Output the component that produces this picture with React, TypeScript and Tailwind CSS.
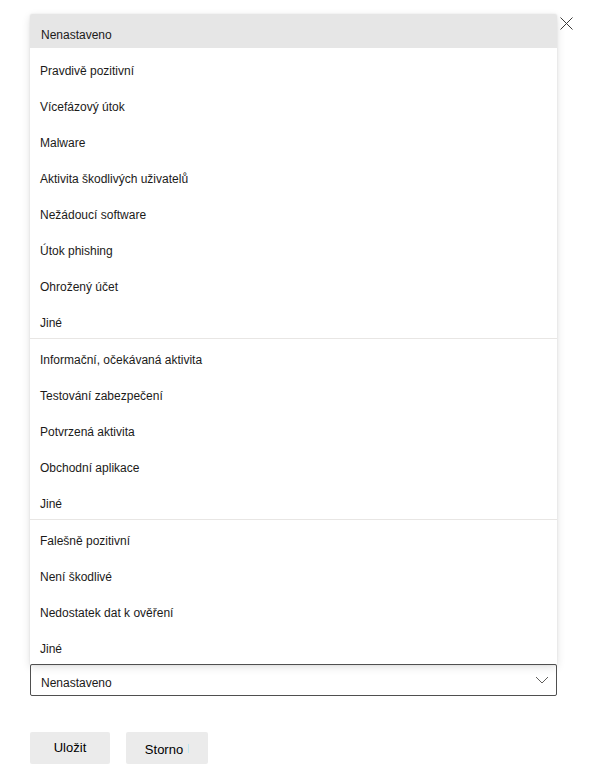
import React from "react";

const groups: string[][] = [
  [
    "Pravdivě pozitivní",
    "Vícefázový útok",
    "Malware",
    "Aktivita škodlivých uživatelů",
    "Nežádoucí software",
    "Útok phishing",
    "Ohrožený účet",
    "Jiné",
  ],
  [
    "Informační, očekávaná aktivita",
    "Testování zabezpečení",
    "Potvrzená aktivita",
    "Obchodní aplikace",
    "Jiné",
  ],
  ["Falešně pozitivní", "Není škodlivé", "Nedostatek dat k ověření", "Jiné"],
];

export default function App() {
  return (
    <div
      className="min-h-[779px] w-[589px] bg-white text-[12px] text-[#1b1a19]"
      style={{ fontFamily: '"Liberation Sans", Arial, sans-serif' }}
    >
      <div className="flex items-start pl-[30px] pt-[14px]">
        <div className="flex w-[527px] flex-col">
          <div className="rounded-t-[2px] bg-white shadow-[0_3px_8px_rgba(0,0,0,0.13),0_0.6px_1.8px_rgba(0,0,0,0.11)]">
            <div className="flex h-[34px] items-center rounded-t-[2px] bg-[#e6e6e6] px-[11px] pt-[7px]">
              Nenastaveno
            </div>
            <div className="h-[2px]" />
            {groups.map((g, gi) => (
              <div
                key={gi}
                className={gi < groups.length - 1 ? "border-b border-[#e8e6e4]" : ""}
              >
                {g.map((t, i) => (
                  <div key={i} className="flex h-[36px] items-center px-[10px] pt-[5px]">
                    {t}
                  </div>
                ))}
              </div>
            ))}
          </div>
          <div className="flex h-[32px] items-center justify-between rounded-[2px] border border-[#4f4f4f] pl-[10px] pr-[6px]">
            <span className="pt-[5px]">Nenastaveno</span>
            <svg width="14" height="8" viewBox="0 0 14 8" className="mr-[1px]">
              <path d="M1 1 L7 7 L13 1" fill="none" stroke="#605e5c" strokeWidth="1" />
            </svg>
          </div>
          <div className="mt-[36px] flex gap-[16px]">
            <button className="flex h-[32px] w-[80px] items-center justify-center rounded-[2px] bg-[#ebebeb] pb-[1px] text-[13px] text-black">
              Uložit
            </button>
            <button className="flex h-[32px] w-[82px] items-center justify-center rounded-[2px] bg-[#ebebeb] pt-[4px] text-[13px] text-black">
              <span>Storno</span>
              <span className="ml-[5px] mb-[3px] h-[9px] w-px bg-[#bfe8f0]" />
            </button>
          </div>
        </div>
        <button className="ml-[3px] mt-[3px] flex h-[12px] w-[13px] items-center justify-center">
          <svg width="13" height="13" viewBox="0 0 13 13">
            <path d="M0.5 0.5 L12.5 12.5 M12.5 0.5 L0.5 12.5" stroke="#3b3a39" strokeWidth="1" />
          </svg>
        </button>
      </div>
    </div>
  );
}
